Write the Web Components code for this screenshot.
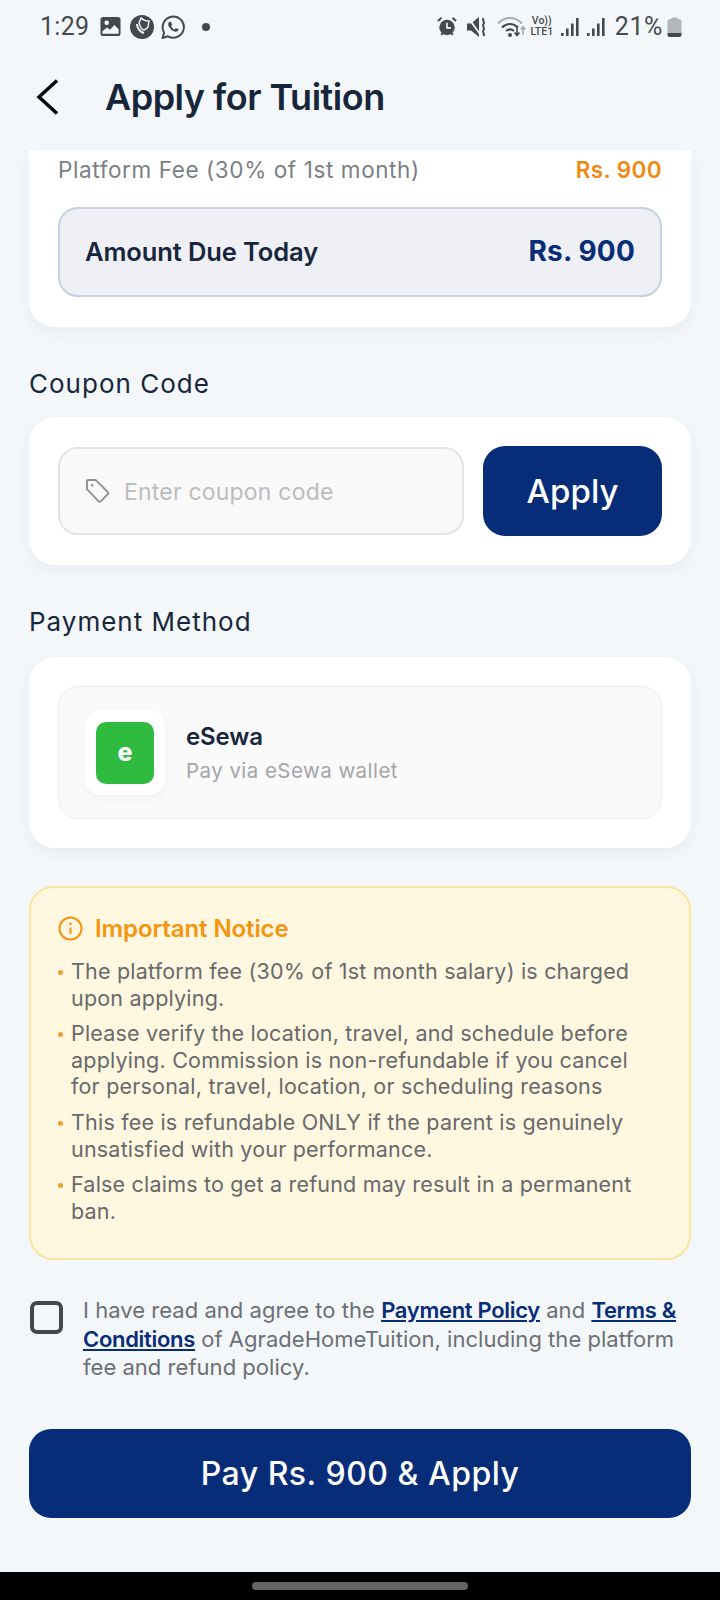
<!DOCTYPE html>
<html>
<head>
<meta charset="utf-8">
<style>
    html, body { margin: 0; padding: 0; }
    body {
        width: 720px;
        height: 1600px;
        overflow: hidden;
        background: #F3F7FA;
        font-family: Inter, "Open Sans", sans-serif;
        color: #17263A;
    }
    #app { display: flex; flex-direction: column; height: 1600px; }
    #content { flex: 1; display: flex; flex-direction: column; padding: 0 29px; min-height: 0; }
</style>
</head>
<body>
<div id="app">
    <status-bar></status-bar>
    <app-header>Apply for Tuition</app-header>
    <div id="content">
        <fee-summary></fee-summary>
        <section-label style="margin-top:40px;margin-bottom:16px">Coupon Code</section-label>
        <coupon-form></coupon-form>
        <section-label style="margin-top:40px;margin-bottom:18px">Payment Method</section-label>
        <payment-method></payment-method>
        <notice-box>
            <notice-item>The platform fee (30% of 1st month salary) is charged upon applying.</notice-item>
            <notice-item>Please verify the location, travel, and schedule before applying. Commission is non-refundable if you cancel for personal, travel, location, or scheduling reasons</notice-item>
            <notice-item>This fee is refundable ONLY if the parent is genuinely unsatisfied with your performance.</notice-item>
            <notice-item>False claims to get a refund may result in a permanent ban.</notice-item>
        </notice-box>
        <agree-row></agree-row>
        <pay-button>Pay Rs. 900 &amp; Apply</pay-button>
    </div>
    <nav-bar></nav-bar>
</div>

<script>
    const SIGNAL = `<path d="M0 15h2.600v3H0zM5 10.500h2.600V18H5zM10 5.500h2.600V18H10zM15 0h2.600v18H15z" fill="#45494F"/>`;

    class StatusBar extends HTMLElement {
        constructor() {
            super();
            this.attachShadow({ mode: "open" });
            this.shadowRoot.innerHTML = `
                <style>
                    :host { display: flex; align-items: center; height: 53px; padding: 0 38px 0 40px; color: #45494F; font-family: Roboto, sans-serif; }
                    .time { font-size: 25px; letter-spacing: 0.3px; margin-right: 11px; }
                    .left, .right { display: flex; align-items: center; }
                    .right { margin-left: auto; }
                    svg { display: block; flex: none; }
                    .dot { width: 8px; height: 8px; border-radius: 50%; background: #45494F; margin-left: 17px; }
                    .vo { font-size: 10.500px; line-height: 10.500px; font-weight: 500; text-align: center; width: 26px; margin: 0 6px 0 2px; }
                    .pct { font-size: 25px; letter-spacing: 0.6px; margin: 0 4px 0 10px; }
                </style>
                <div class="left">
                    <span class="time">1:29</span>
                    <svg width="21" height="21" viewBox="0 0 22 22"><rect x="0.500" y="1" width="21" height="20" rx="3" fill="#45494F"/><circle cx="7" cy="7" r="2.400" fill="#F3F7FA"/><path d="M2.500 18.500v-2.500l5-4 3 2.500 4.500-5 4.500 4.500v4.500z" fill="#F3F7FA"/></svg>
                    <svg style="margin-left:9px" width="24" height="24" viewBox="0 0 24 24"><circle cx="12" cy="12" r="12" fill="#45494F"/><path d="M11 3c3 3 6 3 8 3l-1 6c-2 2-3 3-4 3-2 0-4-4-5-7z" fill="#45494F" stroke="#F3F7FA" stroke-width="1.400"/><path d="M7 9c0 4 3 8 7 9" fill="none" stroke="#F3F7FA" stroke-width="2"/></svg>
                    <svg style="margin-left:7px" width="24" height="24" viewBox="0 0 24 24"><path d="M1.500 23l1.600-5.600A10.600 10.600 0 1 1 7 21.300z" fill="none" stroke="#45494F" stroke-width="2" stroke-linejoin="round"/><path d="M8.600 6.800c-.7.3-1.600 1.400-1.400 3 .3 2.500 4.400 7 7.600 7 1.600 0 2.700-1 2.900-2.200l-2.800-1.500-1.300 1.300c-1.400-.5-3-2.200-3.500-3.500l1.100-1.200-1.200-2.900z" fill="#45494F"/></svg>
                    <span class="dot"></span>
                </div>
                <div class="right">
                    <svg width="20" height="21" viewBox="0 0 22 22"><circle cx="11" cy="12" r="8.500" fill="#45494F"/><path d="M1 5l4-3.500M21 5l-4-3.500M4.500 20l2-2M17.500 20l-2-2" stroke="#45494F" stroke-width="2.200"/><path d="M11 7v5.500h4.500" fill="none" stroke="#F3F7FA" stroke-width="1.800"/></svg>
                    <svg style="margin-left:10px" width="21" height="22" viewBox="0 0 21 22"><path d="M0 7.500h4l8-6.500v20l-8-6.500H0z" fill="#45494F"/><path d="M1 1.500l13 18" stroke="#F3F7FA" stroke-width="1.800"/><path d="M16.500 2c-2 2.500 2 3.500 0 6s2 3.500 0 6 2 3.500 0 6" fill="none" stroke="#45494F" stroke-width="2"/></svg>
                    <svg style="margin-left:9px" width="30" height="22" viewBox="0 0 30 22"><path d="M1 7.500c7-7.500 17-7.500 24 0" fill="none" stroke="#A9ACB0" stroke-width="2"/><path d="M5 11.500c5-4.500 11-4.500 16 0M9 15c3-2.500 5-2.500 8 0" fill="none" stroke="#45494F" stroke-width="2.200"/><circle cx="13" cy="19" r="2" fill="#45494F"/><path d="M20 10v9M17.500 16.500l2.500 3 2.500-3" fill="none" stroke="#45494F" stroke-width="1.600"/><path d="M26 19v-8M23.800 13.500l2.200-2.700 2.200 2.700" fill="none" stroke="#A9ACB0" stroke-width="1.600"/></svg>
                    <div class="vo">Vo))<br>LTE1</div>
                    <svg width="18" height="18" viewBox="0 0 18 18">${SIGNAL}</svg>
                    <svg style="margin-left:8px" width="18" height="18" viewBox="0 0 18 18">${SIGNAL}</svg>
                    <span class="pct">21%</span>
                    <svg width="15" height="22" viewBox="0 0 15 22"><path d="M4.500 1.500h6V3H12a2.500 2.500 0 0 1 2.500 2.500V18h-14V5.500A2.500 2.500 0 0 1 3 3h1.500z" fill="#B4B6B8"/><path d="M.5 17h14v2a2 2 0 0 1-2 2h-10a2 2 0 0 1-2-2z" fill="#45494F"/></svg>
                </div>
            `;
        }
    }

    class AppHeader extends HTMLElement {
        constructor() {
            super();
            this.attachShadow({ mode: "open" });
            this.shadowRoot.innerHTML = `
                <style>
                    :host { display: flex; align-items: center; height: 97px; padding: 0 0 9px 36px; box-sizing: border-box; }
                    svg { display: block; width: 24px; height: 38px; margin-right: 45px; }
                    .title { font-size: 36px; font-weight: 600; letter-spacing: -0.5px; color: #17263A; }
                </style>
                <svg viewBox="0 0 24 38"><path d="M21 2.500L3 19l18 16.500" fill="none" stroke="#000" stroke-width="3.400"/></svg>
                <div class="title"><slot></slot></div>
            `;
        }
    }

    class FeeSummary extends HTMLElement {
        constructor() {
            super();
            this.attachShadow({ mode: "open" });
            this.shadowRoot.innerHTML = `
                <style>
                    :host { display: block; background: #fff; border-radius: 0 0 26px 26px; padding: 0 29px 30px; box-shadow: 0 5px 14px rgba(40,60,90,0.05); }
                    .row { display: flex; justify-content: space-between; align-items: center; height: 38px; margin-bottom: 19px; }
                    .label { font-size: 22.500px; color: #7A7F85; letter-spacing: 0.6px; }
                    .fee { font-size: 22.500px; font-weight: 600; color: #EE8A14; letter-spacing: 0.4px; }
                    .due { display: flex; justify-content: space-between; align-items: center; height: 90px; box-sizing: border-box; padding: 0 25px 2px; background: #EEF0F6; border: 2px solid #C9D0E0; border-radius: 20px; }
                    .due b { font-size: 25.500px; font-weight: 600; color: #17263A; letter-spacing: -0.1px; }
                    .due strong { font-size: 28px; font-weight: 700; color: #072C78; letter-spacing: 0.2px; }
                </style>
                <div class="row"><span class="label">Platform Fee (30% of 1st month)</span><span class="fee">Rs. 900</span></div>
                <div class="due"><b>Amount Due Today</b><strong>Rs. 900</strong></div>
            `;
        }
    }

    class SectionLabel extends HTMLElement {
        constructor() {
            super();
            this.attachShadow({ mode: "open" });
            this.shadowRoot.innerHTML = `
                <style>
                    :host { display: block; font-size: 26px; line-height: 34px; color: #17263A; font-weight: 400; letter-spacing: 1px; }
                </style>
                <slot></slot>
            `;
        }
    }

    class CouponForm extends HTMLElement {
        constructor() {
            super();
            this.attachShadow({ mode: "open" });
            this.shadowRoot.innerHTML = `
                <style>
                    :host { display: flex; gap: 19px; background: #fff; border-radius: 26px; padding: 29px; box-shadow: 0 5px 14px rgba(40,60,90,0.05); }
                    .field { flex: 1; display: flex; align-items: center; height: 88px; margin-top: 1px; box-sizing: border-box; padding: 2px 0 0 25px; background: #F9F9F9; border: 2px solid #E2E3E5; border-radius: 20px; }
                    svg { width: 25px; height: 25px; margin-right: 14px; margin-top: -3px; }
                    .ph { font-size: 23px; color: #BBBCBE; letter-spacing: 0.2px; }
                    .apply { width: 179px; height: 90px; display: flex; align-items: center; justify-content: center; background: #072C78; color: #fff; border-radius: 22px; font-size: 33px; font-weight: 500; letter-spacing: 0.1px; }
                </style>
                <div class="field">
                    <svg viewBox="0 0 26 26"><path d="M2 3.500A1.500 1.500 0 0 1 3.500 2H11l12.500 12.500a1.800 1.800 0 0 1 0 2.500l-7 7a1.800 1.800 0 0 1-2.500 0L2 11.500z" fill="none" stroke="#8F9094" stroke-width="2" stroke-linejoin="round"/><circle cx="7.500" cy="7.500" r="1.300" fill="#8F9094"/></svg>
                    <span class="ph">Enter coupon code</span>
                </div>
                <div class="apply">Apply</div>
            `;
        }
    }

    class PaymentMethod extends HTMLElement {
        constructor() {
            super();
            this.attachShadow({ mode: "open" });
            this.shadowRoot.innerHTML = `
                <style>
                    :host { display: block; background: #fff; border-radius: 26px; padding: 29px; box-shadow: 0 5px 14px rgba(40,60,90,0.05); }
                    .box { display: flex; align-items: center; height: 133px; box-sizing: border-box; padding-left: 26px; background: #FAFAFB; border: 1.500px solid #EDEEF0; border-radius: 20px; }
                    .icon { width: 80px; height: 85px; display: flex; align-items: center; justify-content: center; background: #fff; border-radius: 16px; box-shadow: 0 3px 8px rgba(40,60,90,0.05); margin-right: 21px; }
                    .logo { width: 58px; height: 62px; display: flex; align-items: center; justify-content: center; background: #2EBB3F; border-radius: 10px; color: #fff; font-size: 25px; font-weight: 800; padding-bottom: 2px; box-sizing: border-box; }
                    .name { font-size: 24px; font-weight: 600; color: #17263A; letter-spacing: -0.1px; line-height: 30px; margin-bottom: 5px; }
                    .sub { font-size: 20.500px; color: #A3A5A9; letter-spacing: 0.45px; line-height: 27px; }
                </style>
                <div class="box">
                    <div class="icon"><div class="logo">e</div></div>
                    <div>
                        <div class="name">eSewa</div>
                        <div class="sub">Pay via eSewa wallet</div>
                    </div>
                </div>
            `;
        }
    }

    class NoticeBox extends HTMLElement {
        constructor() {
            super();
            this.attachShadow({ mode: "open" });
            this.shadowRoot.innerHTML = `
                <style>
                    :host { display: block; height: 374px; box-sizing: border-box; margin-top: 38px; padding: 24px 27px 0; background: #FFF7E0; border: 2px solid #FBE4A0; border-radius: 24px; }
                    .head { display: flex; align-items: center; height: 32px; margin-bottom: 14px; color: #F5940F; font-size: 24px; font-weight: 600; letter-spacing: -0.1px; }
                    svg { width: 25px; height: 25px; margin-right: 12px; }
                    .list { display: flex; flex-direction: column; gap: 9px; padding-right: 20px; }
                </style>
                <div class="head">
                    <svg viewBox="0 0 25 25"><circle cx="12.500" cy="12.500" r="11" fill="none" stroke="#F5940F" stroke-width="2"/><path d="M12.500 11.500v6.500" stroke="#F5940F" stroke-width="2"/><circle cx="12.500" cy="7.800" r="1.300" fill="#F5940F"/></svg>
                    Important Notice
                </div>
                <div class="list"><slot></slot></div>
            `;
        }
    }

    class NoticeItem extends HTMLElement {
        constructor() {
            super();
            this.attachShadow({ mode: "open" });
            this.shadowRoot.innerHTML = `
                <style>
                    :host { display: flex; font-size: 21.500px; line-height: 26.600px; color: #67696A; letter-spacing: 0.2px; }
                    .dot { flex: none; width: 5px; height: 5px; border-radius: 50%; background: #F0A030; margin: 12px 8px 0 0; }
                </style>
                <span class="dot"></span>
                <span><slot></slot></span>
            `;
        }
    }

    class AgreeRow extends HTMLElement {
        constructor() {
            super();
            this.attachShadow({ mode: "open" });
            this.shadowRoot.innerHTML = `
                <style>
                    :host { display: flex; margin-top: 36px; font-size: 22px; line-height: 28.500px; color: #6C6F74; letter-spacing: 0.03px; }
                    .box { flex: none; width: 33px; height: 33px; box-sizing: border-box; border: 4px solid #45474D; border-radius: 7px; margin: 5px 20px 0 1px; }
                    a { color: #072C78; font-weight: 600; text-decoration: underline; letter-spacing: -0.3px; }
                    p { margin: 0; flex: 1; }
                </style>
                <div class="box"></div>
                <p>I have read and agree to the <a>Payment Policy</a> and <a>Terms &amp;</a> <a>Conditions</a> of AgradeHomeTuition, including the platform fee and refund policy.</p>
            `;
        }
    }

    class PayButton extends HTMLElement {
        constructor() {
            super();
            this.attachShadow({ mode: "open" });
            this.shadowRoot.innerHTML = `
                <style>
                    :host { display: flex; align-items: center; justify-content: center; height: 89px; margin-top: 47px; background: #072C78; color: #fff; border-radius: 22px; font-size: 32px; font-weight: 500; letter-spacing: 0.5px; }
                </style>
                <slot></slot>
            `;
        }
    }

    class NavBar extends HTMLElement {
        constructor() {
            super();
            this.attachShadow({ mode: "open" });
            this.shadowRoot.innerHTML = `
                <style>
                    :host { display: flex; align-items: center; justify-content: center; flex: none; height: 28px; background: #000; }
                    div { width: 216px; height: 8px; border-radius: 4px; background: #666; margin-top: -1px; }
                </style>
                <div></div>
            `;
        }
    }

    customElements.define("status-bar", StatusBar);
    customElements.define("app-header", AppHeader);
    customElements.define("fee-summary", FeeSummary);
    customElements.define("section-label", SectionLabel);
    customElements.define("coupon-form", CouponForm);
    customElements.define("payment-method", PaymentMethod);
    customElements.define("notice-box", NoticeBox);
    customElements.define("notice-item", NoticeItem);
    customElements.define("agree-row", AgreeRow);
    customElements.define("pay-button", PayButton);
    customElements.define("nav-bar", NavBar);
</script>
</body>
</html>
